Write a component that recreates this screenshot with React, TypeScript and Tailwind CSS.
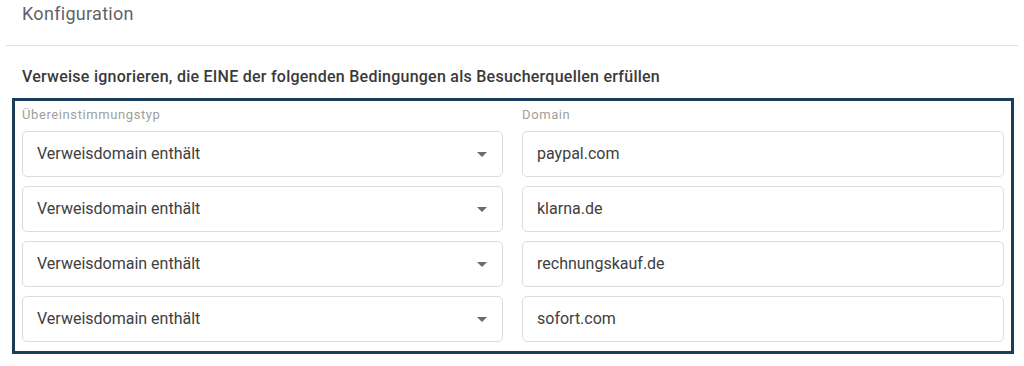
import React from "react";

const rows = ["paypal.com", "klarna.de", "rechnungskauf.de", "sofort.com"];

function Caret() {
  return (
    <svg width="10" height="5" viewBox="0 0 10 5" className="shrink-0">
      <path d="M0 0 L10 0 L5 5 Z" fill="#6b6b6b" />
    </svg>
  );
}

export default function App() {
  return (
    <div
      className="w-[1024px] h-[366px] bg-white overflow-hidden"
      style={{ fontFamily: "Roboto, 'Liberation Sans', sans-serif" }}
    >
      <div className="pl-[22px] pt-[1px] h-[45px] text-[18px] leading-[26px] tracking-[0.3px] text-[#5f6368]">
        Konfiguration
      </div>
      <div className="mx-[6px] h-px bg-[#e2e2e2]" />
      <div className="pl-[22px] pt-[20px] h-[52px] text-[16px] leading-[22px] tracking-[0.25px] font-medium text-[#3a3a3a]">
        Verweise ignorieren, die EINE der folgenden Bedingungen als Besucherquellen erfüllen
      </div>
      <div className="ml-[12px] w-[1002px] border-[3px] border-[#1b3d57] px-[7px] pt-[6px] pb-[9px]">
        <div className="grid grid-cols-[481px_482px] gap-x-[19px]">
          <div className="text-[13px] leading-[16px] tracking-[0.6px] text-[#a0a0a0] mb-[8px]">Übereinstimmungstyp</div>
          <div className="text-[13px] leading-[16px] tracking-[0.6px] text-[#a0a0a0] mb-[8px]">Domain</div>
        </div>
        <div className="grid grid-cols-[481px_482px] gap-x-[19px] gap-y-[9px]">
          {rows.map((d) => (
            <React.Fragment key={d}>
              <div className="h-[46px] border border-[#dcdcdc] rounded-[5px] flex items-center pl-[14px] pr-[15px] justify-between">
                <span className="text-[16px] text-[#404040]">Verweisdomain enthält</span>
                <Caret />
              </div>
              <div className="h-[46px] border border-[#dcdcdc] rounded-[5px] flex items-center pl-[14px]">
                <span className="text-[16px] text-[#404040]">{d}</span>
              </div>
            </React.Fragment>
          ))}
        </div>
      </div>
    </div>
  );
}
